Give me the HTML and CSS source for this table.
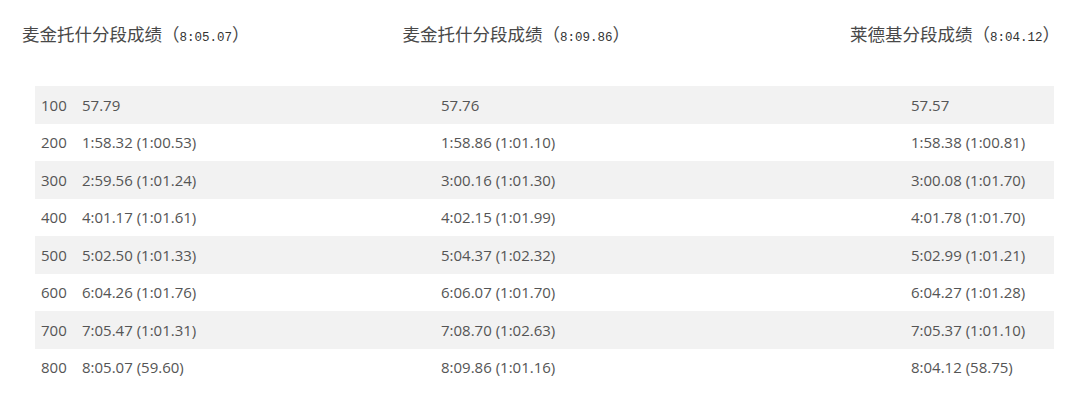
FILE: index.html
```html
<!DOCTYPE html>
<html lang="zh">
<head>
<meta charset="utf-8">
<link rel="stylesheet" href="styles.css">
</head>
<body>
<div class="page">
  <div class="heads">
    <div class="head h1">麦金托什分段成绩<span class="paren">（</span><span class="num">8:05.07</span><span class="paren">）</span></div>
    <div class="head h2">麦金托什分段成绩<span class="paren">（</span><span class="num">8:09.86</span><span class="paren">）</span></div>
    <div class="head h3">莱德基分段成绩<span class="paren">（</span><span class="num">8:04.12</span><span class="paren">）</span></div>
  </div>
  <div class="table">
    <div class="row"><div class="c1"><span class="dist">100</span><span>57.79</span></div><div class="c2">57.76</div><div class="c3">57.57</div></div>
    <div class="row"><div class="c1"><span class="dist">200</span><span>1:58.32 (1:00.53)</span></div><div class="c2">1:58.86 (1:01.10)</div><div class="c3">1:58.38 (1:00.81)</div></div>
    <div class="row"><div class="c1"><span class="dist">300</span><span>2:59.56 (1:01.24)</span></div><div class="c2">3:00.16 (1:01.30)</div><div class="c3">3:00.08 (1:01.70)</div></div>
    <div class="row"><div class="c1"><span class="dist">400</span><span>4:01.17 (1:01.61)</span></div><div class="c2">4:02.15 (1:01.99)</div><div class="c3">4:01.78 (1:01.70)</div></div>
    <div class="row"><div class="c1"><span class="dist">500</span><span>5:02.50 (1:01.33)</span></div><div class="c2">5:04.37 (1:02.32)</div><div class="c3">5:02.99 (1:01.21)</div></div>
    <div class="row"><div class="c1"><span class="dist">600</span><span>6:04.26 (1:01.76)</span></div><div class="c2">6:06.07 (1:01.70)</div><div class="c3">6:04.27 (1:01.28)</div></div>
    <div class="row"><div class="c1"><span class="dist">700</span><span>7:05.47 (1:01.31)</span></div><div class="c2">7:08.70 (1:02.63)</div><div class="c3">7:05.37 (1:01.10)</div></div>
    <div class="row"><div class="c1"><span class="dist">800</span><span>8:05.07 (59.60)</span></div><div class="c2">8:09.86 (1:01.16)</div><div class="c3">8:04.12 (58.75)</div></div>
  </div>
</div>
</body>
</html>
```
FILE: styles.css
```css
html, body {
  margin: 0;
  padding: 0;
  background: #ffffff;
}
.page {
  width: 1080px;
  height: 403px;
  overflow: hidden;
}
.heads {
  display: flex;
  height: 86px;
  padding-top: 22px;
  box-sizing: border-box;
  align-items: flex-start;
}
.head {
  font-family: "Noto Sans CJK SC", sans-serif;
  font-size: 17.5px;
  line-height: 24px;
  color: #484848;
  white-space: nowrap;
}
.head .num {
  font-family: "Liberation Mono", monospace;
  font-size: 12.5px;
  color: #333;
}
.h1 { margin-left: 22px; }
.h2 { margin-left: 153px; }
.h3 { margin-left: auto; margin-right: 20px; }
.table {
  margin-left: 35px;
  width: 1019px;
}
.row {
  display: grid;
  grid-template-columns: 406px 470px 1fr;
  height: 37.5px;
  align-items: center;
  font-family: "Open Sans", sans-serif;
  font-size: 15px;
  color: #555;
  white-space: nowrap;
}
.row:nth-child(odd) {
  background: #f2f2f2;
}
.c1 {
  display: flex;
  padding-left: 6px;
}
.dist {
  width: 41px;
}
```
